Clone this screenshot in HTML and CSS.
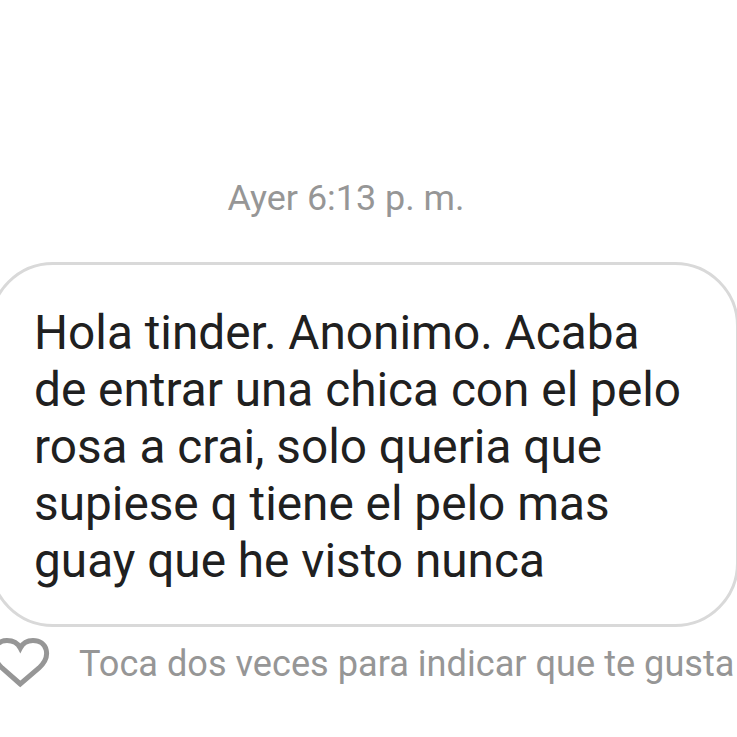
FILE: index.html
```html
<!DOCTYPE html>
<html lang="es">
<head>
<meta charset="utf-8">
<title>Mensaje</title>
<link rel="stylesheet" href="styles.css">
</head>
<body>
<main class="chat">
  <time class="stamp">Ayer 6:13 p. m.</time>
  <p class="bubble">Hola tinder. Anonimo. Acaba<br>de entrar una chica con el pelo<br>rosa a crai, solo queria que<br>supiese q tiene el pelo mas<br>guay que he visto nunca</p>
  <div class="hint">
    <svg class="heart" viewBox="0 0 60 52" width="60" height="52"><path d="M30.3 47 L12 31 C-1 19 4 3.5 17 3.5 C23 3.5 28 6.5 30.3 11 C32.6 6.5 37 3.5 43 3.5 C57 3.5 62 19 49 31 Z"/></svg>
    <span>Toca dos veces para indicar que te gusta</span>
  </div>
</main>
</body>
</html>
```
FILE: styles.css
```css
* { box-sizing: border-box; }
body { margin: 0; background: #fff; font-family: Roboto, sans-serif; overflow: hidden; }
.chat { width: 737px; height: 737px; overflow: hidden; padding-top: 176px; }
.stamp { display: block; width: 692px; height: 44px; line-height: 44px; text-align: center; font-size: 35.9px; color: #969696; }
.bubble { margin: 42px 0 0 -11px; width: 750px; height: 365px; padding: 40px 0 0 42px; border: 3px solid #d9d9d9; border-radius: 64px; font-size: 47.75px; line-height: 57px; color: #202020; white-space: nowrap; }
.hint { display: flex; align-items: center; height: 72px; margin-left: -10px; white-space: nowrap; font-size: 36.15px; line-height: 43px; color: #969696; }
.hint span { margin-left: 29px; padding-top: 1px; }
.heart { flex: none; fill: none; stroke: #969696; stroke-width: 5; stroke-linejoin: miter; }
```
